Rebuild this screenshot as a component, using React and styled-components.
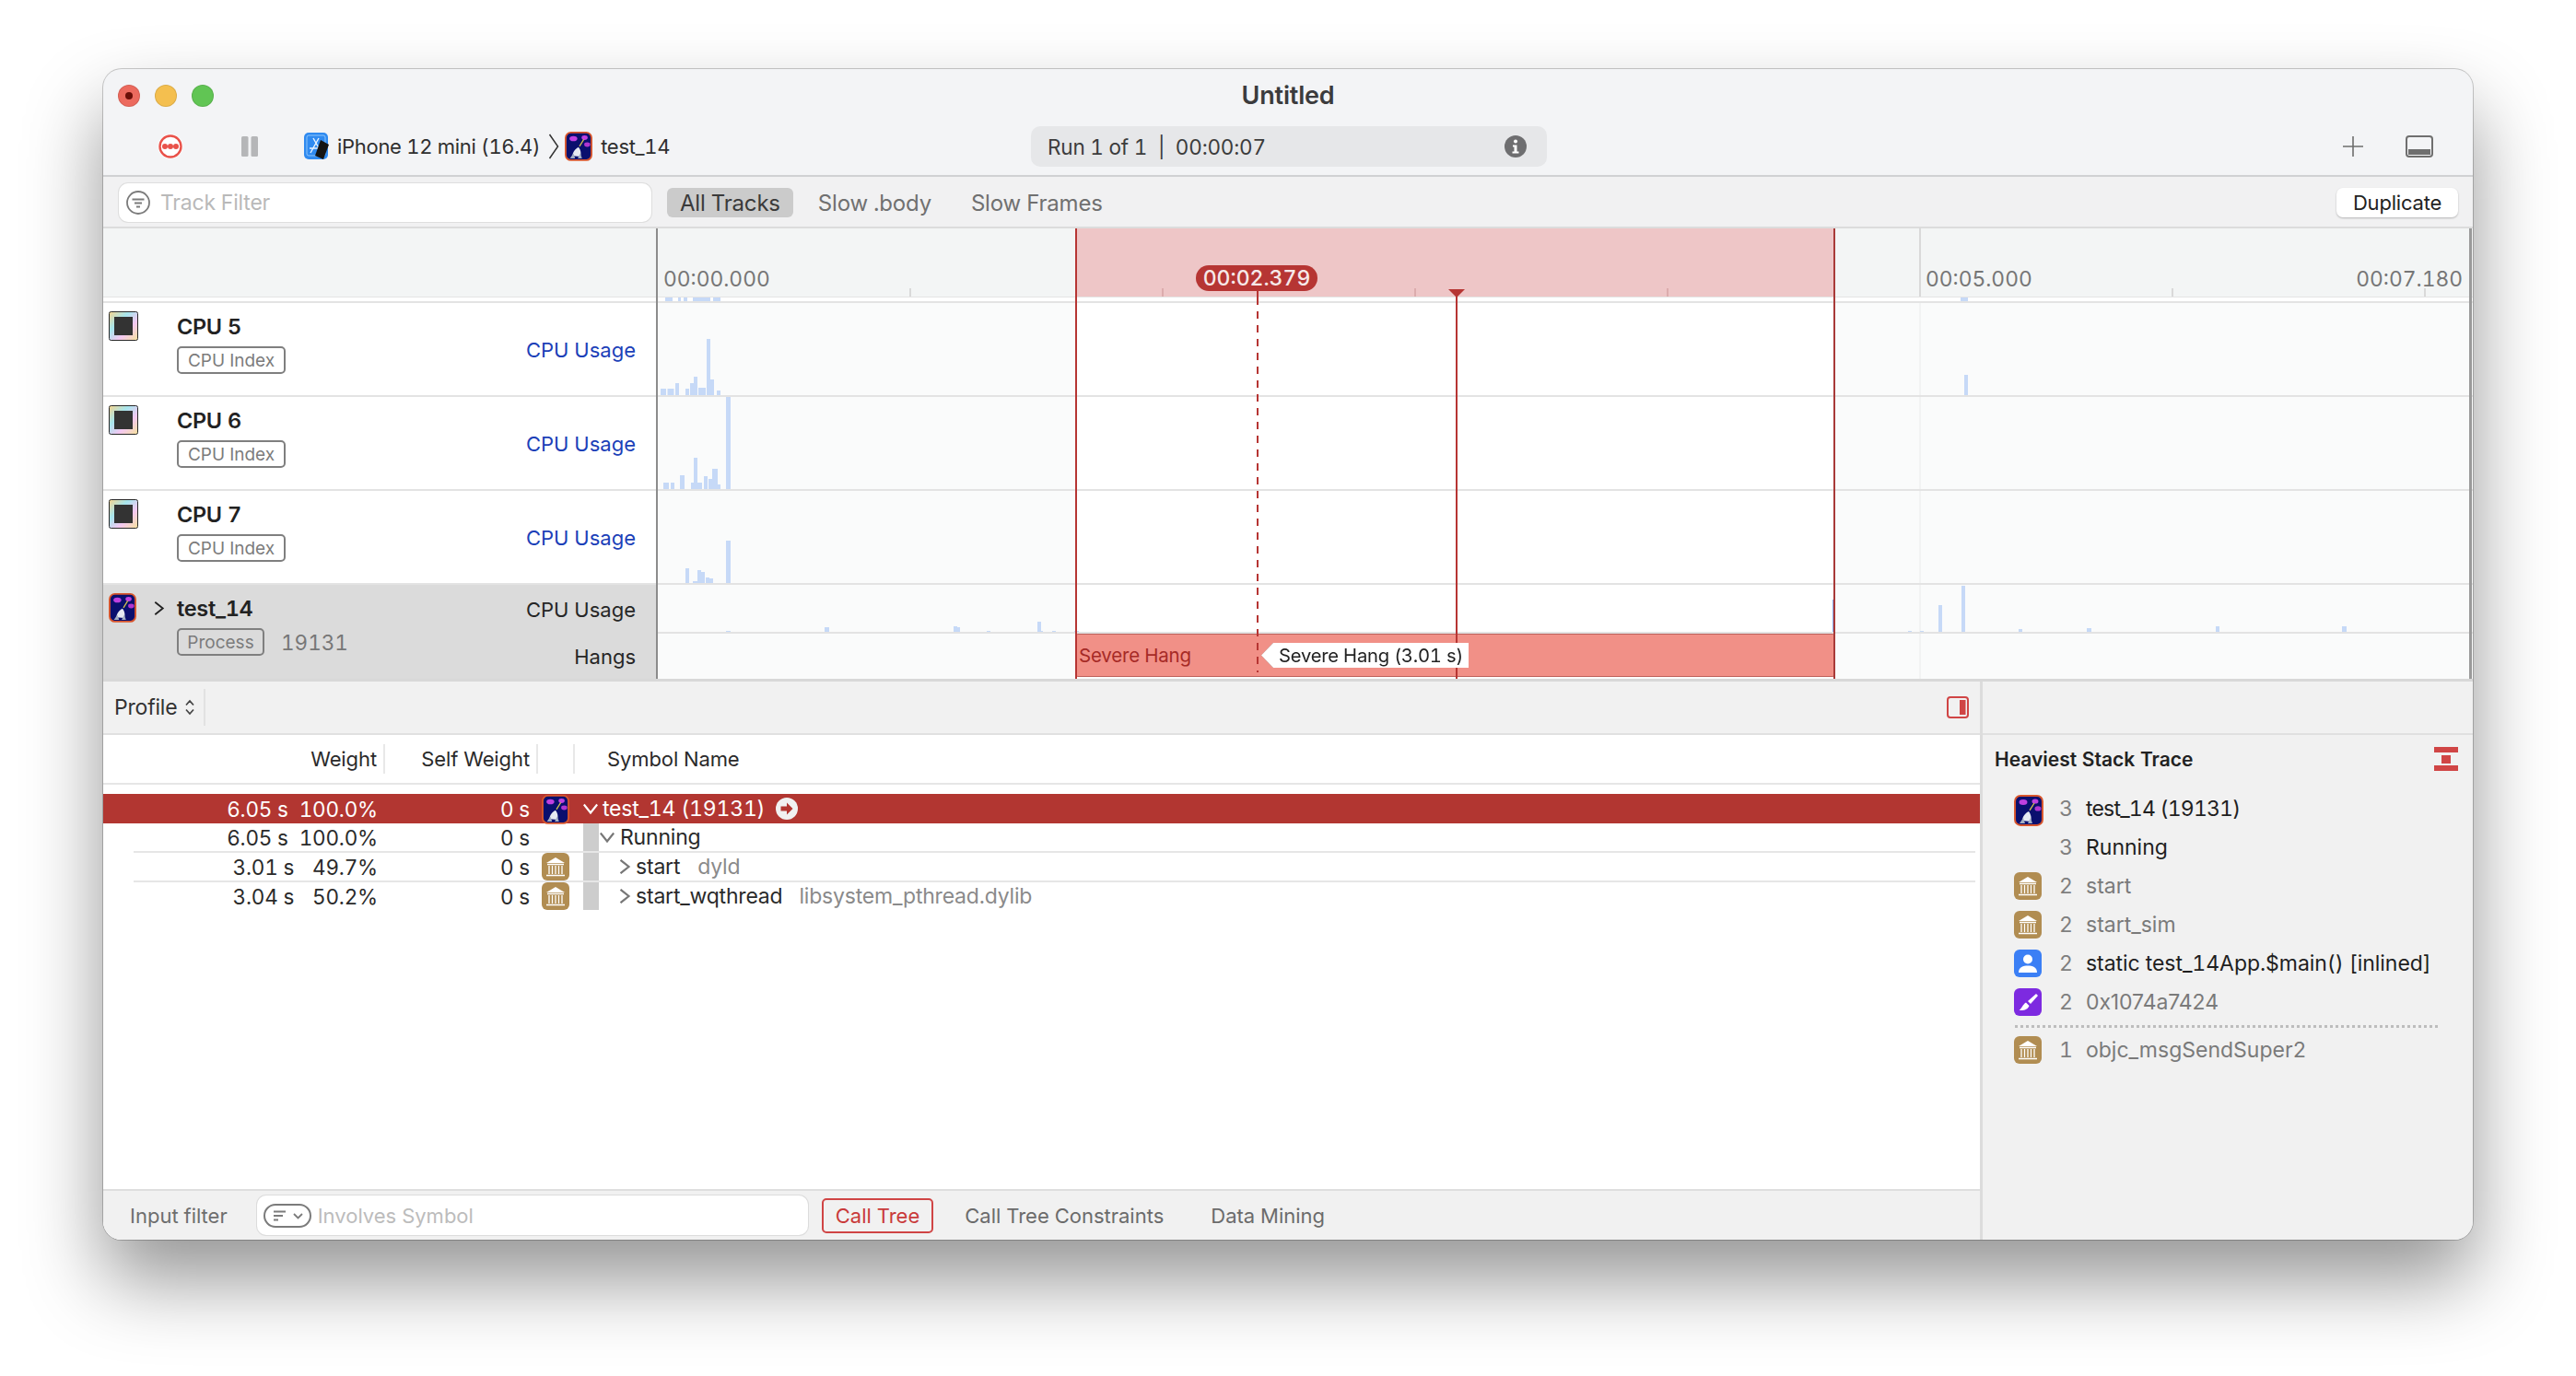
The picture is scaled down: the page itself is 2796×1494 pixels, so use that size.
import React from 'react'
import styled, { createGlobalStyle } from 'styled-components'

const FONT = 'Inter, "Noto Sans", "Liberation Sans", sans-serif'

const GlobalStyle = createGlobalStyle`
  html, body {
    margin: 0;
    padding: 0;
    background: #fff;
  }
  body {
    font-family: ${FONT};
    font-size: 22px;
    font-variant-numeric: tabular-nums;
    color: #262626;
    -webkit-font-smoothing: antialiased;
  }
  * {
    box-sizing: border-box;
  }
`

const Page = styled.div`
  width: 2796px;
  height: 1494px;
  padding: 75px 112px 148px;
  overflow: hidden;
  background: #fff;
`
const Window = styled.div`
  width: 2572px;
  height: 1271px;
  display: flex;
  flex-direction: column;
  overflow: hidden;
  border-radius: 20px;
  background: #f3f4f6;
  box-shadow: 0 0 0 1px rgba(0, 0, 0, 0.2), 0 44px 84px rgba(0, 0, 0, 0.42);
`

/* title + toolbar */
const TitleRow = styled.div`
  height: 58px;
  flex: none;
  position: relative;
  display: flex;
  align-items: center;
  justify-content: center;
  padding-bottom: 2px;
`
const Lights = styled.div`
  position: absolute;
  left: 16px;
  top: 17px;
  display: flex;
  gap: 16px;
`
const Light = styled.div`
  width: 24px;
  height: 24px;
  border-radius: 50%;
  display: flex;
  align-items: center;
  justify-content: center;
  background: ${(p) => p.$color};
  border: 1px solid rgba(0, 0, 0, 0.1);
  i {
    width: 8px;
    height: 8px;
    border-radius: 50%;
    background: #6b0f08;
  }
`
const Title = styled.div`
  font-size: 27px;
  font-weight: 600;
  color: #3b3b3d;
  letter-spacing: -0.2px;
`
const Toolbar = styled.div`
  height: 59px;
  flex: none;
  display: flex;
  align-items: center;
  padding-left: 59px;
  padding-bottom: 5px;
  border-bottom: 2px solid #d0d1d3;
`
const ToolGroup = styled.div`
  display: flex;
  align-items: center;
  flex: none;
  margin-left: ${(p) => p.$left || 0}px;
  width: ${(p) => (p.$w ? `${p.$w}px` : 'auto')};
`
const ToolText = styled.span`
  font-size: 22px;
  color: #2f2f2f;
  letter-spacing: -0.3px;
  white-space: nowrap;
  margin-left: ${(p) => p.$left}px;
`
const Breadcrumb = styled.svg`
  margin: 0 6px 0 9px;
  flex: none;
`
const RunPill = styled.div`
  width: 560px;
  height: 44px;
  padding: 0 22px 0 18px;
  display: flex;
  align-items: center;
  justify-content: space-between;
  border-radius: 10px;
  background: #e6e7e9;
  font-size: 22.5px;
  color: #3c3c3c;
  letter-spacing: -0.2px;
  white-space: pre;
`
const ToolEnd = styled.div`
  margin-left: auto;
  padding-right: 43px;
  display: flex;
  align-items: center;
  gap: 46px;
`

/* filter strip */
const FilterBar = styled.div`
  height: 56px;
  flex: none;
  display: flex;
  align-items: center;
  padding: 2px 16px 0 17px;
  background: #f1f1f2;
  border-bottom: 2px solid #dcdcdc;
`
const TrackFilter = styled.div`
  width: 578px;
  height: 42px;
  display: flex;
  align-items: center;
  gap: 11px;
  padding-left: 8px;
  border-radius: 10px;
  background: #fff;
  box-shadow: 0 0 0 1px #dedede;
  font-size: 23px;
  color: #b9b9b9;
  letter-spacing: -0.2px;
`
const Strategy = styled.div`
  height: 32px;
  margin-left: ${(p) => p.$left}px;
  padding: 0 14px;
  display: flex;
  align-items: center;
  border-radius: 6px;
  font-size: 24px;
  letter-spacing: -0.2px;
  color: ${(p) => (p.$active ? '#3a3a3a' : '#707070')};
  background: ${(p) => (p.$active ? '#cbcbcb' : 'transparent')};
`
const DuplicateBtn = styled.div`
  margin-left: auto;
  width: 132px;
  height: 32px;
  display: flex;
  align-items: center;
  justify-content: center;
  border-radius: 7px;
  background: #fff;
  box-shadow: 0 1px 2px rgba(0, 0, 0, 0.25);
  font-size: 22px;
  letter-spacing: -0.2px;
  color: #222;
`

/* instrument tracks */
const Tracks = styled.div`
  position: relative;
  flex: none;
  height: 492px;
  display: flex;
  flex-direction: column;
  background: #fff;
  border-bottom: 3px solid #d8d8d8;
`
const Ruler = styled.div`
  height: 75px;
  flex: none;
  display: flex;
  background: #f3f5f5;
  border-bottom: 1px solid #e4e4e4;
`
const RulerCorner = styled.div`
  width: 601px;
  flex: none;
`
const RulerAxis = styled.div`
  position: relative;
  flex: 1;
  color: #767676;
  font-size: 22.8px;
`
const RulerBand = styled.div`
  position: absolute;
  left: 454px;
  width: 825px;
  top: 0;
  bottom: 0;
  background: #eec6c7;
`
const RulerLabel = styled.span`
  position: absolute;
  bottom: 6px;
  ${(p) => (p.$right != null ? `right: ${p.$right}px;` : `left: ${p.$left}px;`)}
  line-height: 26px;
`
const Tick = styled.i`
  position: absolute;
  bottom: 0;
  height: ${(p) => (p.$major ? 75 : 9)}px;
  left: ${(p) => p.$left}px;
  width: 2px;
  background: ${(p) => (p.$pink ? '#dcacad' : '#d9d9d9')};
`
const TimePill = styled.div`
  position: absolute;
  left: 585px;
  top: 40px;
  width: 132px;
  height: 28px;
  display: flex;
  align-items: center;
  justify-content: center;
  border-radius: 14px;
  background: #b63533;
  color: #f6e9e9;
  font-size: 23px;
  font-weight: 500;
`
const CpuStrip = styled.div`
  height: 6px;
  flex: none;
  display: flex;
  border-bottom: 2px solid #e3e3e3;
  background: #fff;
`
const TrackRow = styled.div`
  height: 102px;
  flex: none;
  display: flex;
  border-bottom: ${(p) => (p.$last ? 'none' : '2px solid #e3e3e3')};
`
const TrackHead = styled.div`
  position: relative;
  width: 601px;
  flex: none;
  padding: 9px 23px 0 6px;
  display: flex;
  gap: 12px;
  background: ${(p) => (p.$selected ? '#dbdbdb' : '#fff')};
`
const HeadMain = styled.div`
  flex: 1;
  display: flex;
  flex-direction: column;
`
const TrackName = styled.div`
  margin-left: ${(p) => p.$indent || 0}px;
  height: 32px;
  display: flex;
  align-items: center;
  font-size: 23.5px;
  font-weight: 600;
  letter-spacing: -0.3px;
  color: #222;
`
const TagLine = styled.div`
  margin-left: ${(p) => p.$indent || 0}px;
  margin-top: 6px;
  display: flex;
  align-items: center;
  gap: 18px;
  font-size: 22.5px;
  color: #777;
`
const Tag = styled.div`
  width: ${(p) => p.$w}px;
  height: 30px;
  display: flex;
  align-items: center;
  justify-content: center;
  border: 2px solid #7f7f7f;
  border-radius: 5px;
  font-size: 19px;
  color: #7c7c7c;
`
const GraphLabels = styled.div`
  position: absolute;
  right: 23px;
  top: 0;
  bottom: 0;
  display: flex;
  flex-direction: column;
  align-items: flex-end;
  justify-content: ${(p) => (p.$split ? 'flex-start' : 'center')};
  gap: 25px;
  padding-top: ${(p) => (p.$split ? 14 : 2)}px;
  line-height: 26px;
  font-size: 22px;
  color: ${(p) => (p.$link ? '#1b40b8' : '#262626')};
`
const Lane = styled.div`
  position: relative;
  flex: 1;
  overflow: hidden;
  background: #fafbfb;
  svg {
    position: absolute;
    left: 0;
    top: 0;
  }
`
const StripLane = styled(Lane)`
  background: #fff;
`
const LaneSelection = styled.div`
  position: absolute;
  left: 454px;
  width: 825px;
  top: 0;
  bottom: 0;
  background: #fff;
`
const LaneGrid = styled.i`
  position: absolute;
  left: 1370px;
  width: 2px;
  top: 0;
  bottom: 0;
  background: #f2f3f3;
`
const LaneSplit = styled.div`
  position: absolute;
  left: 0;
  right: 0;
  top: 51px;
  height: 2px;
  background: #e3e3e3;
`
const HangBar = styled.div`
  position: absolute;
  left: 454px;
  width: 825px;
  top: 53px;
  height: 47px;
  display: flex;
  align-items: center;
  padding-left: 3px;
  border: 1px solid #bd625c;
  border-radius: 3px;
  background: #f19087;
  color: #a62a26;
  font-size: 20.5px;
  letter-spacing: -0.2px;
`

/* lines over the whole track area */
const Marker = styled.div`
  position: absolute;
  left: ${(p) => p.$left}px;
  top: ${(p) => p.$top}px;
  bottom: 0;
  width: ${(p) => p.$w || 2}px;
  background: ${(p) => p.$color};
`
const DashedMarker = styled.div`
  position: absolute;
  left: 1252px;
  top: 68px;
  bottom: 7px;
  width: 2px;
  background: linear-gradient(#b63533, #b63533) top / 100% 14px no-repeat,
    repeating-linear-gradient(to bottom, transparent 0 7px, #b63533 7px 15px);
`
const HeadMarker = styled.div`
  position: absolute;
  left: 1460px;
  top: 66px;
  width: 18px;
  height: 9px;
  clip-path: polygon(0 0, 100% 0, 50% 100%);
  background: #b63533;
`
const HangTipFrame = styled.div`
  position: absolute;
  left: 1257px;
  top: 450px;
  filter: drop-shadow(0 0 0.7px #6f6f6f);
`
const HangTip = styled.div`
  width: 225px;
  height: 27px;
  display: flex;
  align-items: center;
  padding-left: 19px;
  font-size: 20.2px;
  color: #222;
  letter-spacing: -0.2px;
  white-space: nowrap;
  background: #fff;
  clip-path: polygon(0 50%, 13px 0, 100% 0, 100% 100%, 13px 100%);
`

/* detail area */
const Detail = styled.div`
  flex: 1;
  min-height: 0;
  display: flex;
`
const DetailMain = styled.div`
  width: 2037px;
  flex: none;
  display: flex;
  flex-direction: column;
  background: #fff;
`
const ProfileBar = styled.div`
  height: 58px;
  flex: none;
  display: flex;
  align-items: center;
  padding-right: 12px;
  background: #f1f1f1;
  border-bottom: 2px solid #e0e0e0;
  color: #333;
  font-size: 23px;
`
const ProfileMenu = styled.div`
  height: 40px;
  width: 111px;
  padding-left: 12px;
  display: flex;
  align-items: center;
  gap: 9px;
  border-right: 2px solid #e2e2e2;
  letter-spacing: -0.2px;
`
const SidebarToggle = styled.svg`
  margin-left: auto;
`
const TableHead = styled.div`
  height: 54px;
  flex: none;
  display: flex;
  align-items: center;
  border-bottom: 2px solid #e6e6e6;
  font-size: 22px;
  letter-spacing: -0.1px;
  color: #2a2a2a;
`
const HeadCell = styled.div`
  width: ${(p) => p.$w}px;
  flex: ${(p) => (p.$grow ? 1 : 'none')};
  height: 32px;
  display: flex;
  align-items: center;
  justify-content: ${(p) => (p.$grow ? 'flex-start' : 'flex-end')};
  padding: ${(p) => (p.$grow ? '0 0 0 35px' : '0 7px 0 0')};
  border-right: ${(p) => (p.$grow ? 'none' : '2px solid #e8e8e8')};
`
const TreeBody = styled.div`
  flex: 1;
  padding-top: 10px;
`
const TreeRow = styled.div`
  height: ${(p) => p.$h || 30}px;
  display: flex;
  align-items: center;
  font-size: 23px;
  letter-spacing: -0.2px;
  color: ${(p) => (p.$selected ? '#fff' : '#2a2a2a')};
  background: ${(p) => (p.$selected ? '#b23631' : 'transparent')};
`
const RowRule = styled.div`
  height: 2px;
  margin: 0 5px 0 33px;
  background: #e6e6e6;
`
const WeightCell = styled.div`
  width: 298px;
  flex: none;
  display: flex;
  justify-content: flex-end;
  gap: ${(p) => p.$gap}px;
  font-size: 22.5px;
`
const SelfCell = styled.div`
  width: 165px;
  flex: none;
  text-align: right;
  font-size: 22.5px;
`
const IconCell = styled.div`
  width: 30px;
  height: 30px;
  margin: 0 15px 0 13px;
  flex: none;
`
const TreeCell = styled.div`
  flex: 1;
  height: 100%;
  display: flex;
  align-items: center;
`
const IndentBar = styled.div`
  width: 17px;
  height: 100%;
  flex: none;
  background: #cdcdcd;
`
const Chevron = styled.svg`
  flex: none;
  margin-left: ${(p) => p.$left || 0}px;
  margin-right: ${(p) => p.$right || 0}px;
`
const LibName = styled.span`
  margin-left: ${(p) => p.$left}px;
  color: #8a8a8a;
`
const GoCircle = styled.svg`
  margin-left: 12px;
`

const BottomBar = styled.div`
  height: 55px;
  flex: none;
  display: flex;
  align-items: center;
  padding-left: 29px;
  background: #f1f1f1;
  border-top: 2px solid #dedede;
  font-size: 22px;
  color: #6e6e6e;
`
const InputField = styled.div`
  width: 598px;
  height: 43px;
  margin-left: 32px;
  display: flex;
  align-items: center;
  gap: 7px;
  padding-left: 7px;
  border-radius: 10px;
  background: #fff;
  box-shadow: 0 0 0 1px #dcdcdc;
  color: #bcbcbc;
`
const BottomTab = styled.div`
  height: 38px;
  margin-left: ${(p) => p.$left}px;
  padding: 0 ${(p) => (p.$active ? 13 : 0)}px;
  display: flex;
  align-items: center;
  border-radius: 5px;
  border: ${(p) => (p.$active ? '2px solid #d04545' : 'none')};
  color: ${(p) => (p.$active ? '#c93a3a' : '#6b6b6b')};
`

/* right inspector */
const Inspector = styled.div`
  flex: 1;
  display: flex;
  flex-direction: column;
  background: #f1f1f1;
  border-left: 3px solid #dcdcdc;
`
const InspectorTop = styled.div`
  height: 58px;
  flex: none;
  border-bottom: 2px solid #e0e0e0;
`
const InspectorHead = styled.div`
  height: 52px;
  flex: none;
  padding: 0 16px 0 13px;
  display: flex;
  align-items: center;
  justify-content: space-between;
  font-size: 21px;
  font-weight: 600;
  color: #222;
`
const StackList = styled.div`
  padding: 7px 0 0 34px;
`
const StackRow = styled.div`
  height: 42px;
  display: flex;
  align-items: center;
  font-size: 23px;
  color: ${(p) => (p.$dim ? '#7a7a7a' : '#1f1f1f')};
`
const StackIcon = styled.div`
  width: 30px;
  height: 30px;
  flex: none;
`
const StackCount = styled.span`
  width: 48px;
  flex: none;
  padding-right: 14px;
  text-align: right;
  color: #7f7f7f;
`
const StackName = styled.span`
  letter-spacing: ${(p) => p.$track || 0}px;
  font-variant-numeric: ${(p) => (p.$proportional ? 'normal' : 'tabular-nums')};
`
const StackDots = styled.div`
  width: 460px;
  height: 3px;
  margin: 4px 0 3px 1px;
  background: repeating-linear-gradient(to right, #bdbdbd 0 3px, transparent 3px 6px);
`

/* drawings */
const Glyph = styled.svg`
  display: block;
`

const AppIcon = ({ size = 30 }) => (
  <Glyph width={size} height={size * 1.06} viewBox="0 0 32 34">
    <rect x="1" y="1" width="30" height="32" rx="6" fill="#0a0f6e" stroke="#d8552c" strokeWidth="2" />
    <ellipse cx="10" cy="8" rx="4.5" ry="3" fill="#c040e0" />
    <ellipse cx="23" cy="7" rx="3.5" ry="2.6" fill="#c040e0" />
    <ellipse cx="26" cy="15" rx="3.5" ry="2.6" fill="#b035d0" />
    <path d="M22 9 L17 17" stroke="#d9c64e" strokeWidth="1.3" />
    <path d="M16 18 C19 22 19 26 18 29 L9 28 C9 24 12 20 16 18 Z" fill="#e6eaf2" />
    <path d="M6 31 L10 25 L12 31 Z M20 31 L18 25 L15 31 Z" fill="#a3afc4" />
  </Glyph>
)

const XcodeIcon = () => (
  <Glyph width="30" height="30" viewBox="0 0 30 30">
    <rect x="1" y="0" width="26" height="29" rx="5" fill="#2f8af0" />
    <rect x="4" y="3" width="20" height="22" rx="2" fill="none" stroke="#8cc4fa" strokeWidth="1" />
    <path d="M8 22 L17 6 M20 22 L11 6 M7 17 L21 17" stroke="#e9f4ff" strokeWidth="1.4" />
    <path d="M19 8 L28 13 L22 29 L13 25 Z" fill="#141414" />
  </Glyph>
)

const CpuIcon = () => (
  <Glyph width="32" height="32" viewBox="0 0 32 32">
    <defs>
      <linearGradient id="cpuRim" x1="0" y1="0" x2="1" y2="1">
        <stop offset="0" stopColor="#f6d48e" />
        <stop offset="0.35" stopColor="#a6e6ee" />
        <stop offset="0.65" stopColor="#f4c8f2" />
        <stop offset="1" stopColor="#f6e29a" />
      </linearGradient>
    </defs>
    <rect x="0.5" y="0.5" width="31" height="31" rx="2" fill="url(#cpuRim)" stroke="#2a2a2a" />
    <rect x="6" y="6" width="20" height="20" fill="#333" />
  </Glyph>
)

const LibIcon = () => (
  <Glyph width="30" height="30" viewBox="0 0 30 30">
    <rect width="30" height="30" rx="6" fill="#b18d52" />
    <path d="M15 5 L25 11 L5 11 Z" fill="#fff" />
    <path d="M6 12.5 H24 M5 24.5 H25" stroke="#fff" strokeWidth="1.6" />
    <path d="M8 14 V23 M11.5 14 V23 M15 14 V23 M18.5 14 V23 M22 14 V23" stroke="#fff" strokeWidth="1.3" />
  </Glyph>
)

const UserIcon = () => (
  <Glyph width="30" height="30" viewBox="0 0 30 30">
    <rect width="30" height="30" rx="6" fill="#3b7ff5" />
    <circle cx="15" cy="10.5" r="5" fill="#fff" />
    <path d="M5 25 C5 19 10 17.5 15 17.5 C20 17.5 25 19 25 25 Z" fill="#fff" />
  </Glyph>
)

const BrushIcon = () => (
  <Glyph width="30" height="30" viewBox="0 0 30 30">
    <rect width="30" height="30" rx="6" fill="#7d2ae0" />
    <path d="M24 6 L15 14 L18 17 L26 8 Z" fill="#fff" />
    <path d="M13 15.5 L16.5 19 C15 23 11 24.5 5.5 24 C8.5 22 9.5 17.5 13 15.5 Z" fill="#fff" />
  </Glyph>
)

const TreeChevron = ({ open, color = '#777', size = 16, stroke = 2.2, left, right }) => (
  <Chevron width={size} height={size} viewBox="0 0 16 16" $left={left} $right={right} fill="none">
    <path
      d={open ? 'M0.8 3.5 L8 12.5 L15.2 3.5' : 'M3.5 0.8 L12.5 8 L3.5 15.2'}
      stroke={color}
      strokeWidth={stroke}
    />
  </Chevron>
)

const laneW = 1968
const barsCpu5 = [[4, 6, 7], [11.5, 7, 7], [20, 4, 13], [31, 4, 7], [36, 4, 13], [40, 4, 20], [45, 4, 8], [49, 4, 8], [54, 4, 61], [58, 4, 17], [65, 4, 5], [1419, 4, 22]]
const barsCpu6 = [[7, 6, 7], [15, 4, 7], [25, 5, 15], [37, 3, 7], [40, 4, 34], [44, 5, 7], [51, 4, 14], [56, 4, 11], [60, 6, 22], [66, 3, 5], [75, 5, 102]]
const barsCpu7 = [[31, 4, 16], [39, 5, 2], [44, 4, 14], [48, 4, 12], [53, 4, 6], [57, 4, 5], [75, 5, 46]]
const barsMain = [
  [75, 5, 1], [182, 5, 5], [322, 4, 6], [326, 3, 5], [358, 4, 1], [413, 4, 11], [417, 2, 1], [429, 4, 1], [453, 5, 1],
  [1358, 4, 1], [1371, 4, 1], [1391, 4, 29], [1416, 4, 50], [1478, 4, 3], [1552, 5, 4], [1692, 4, 6], [1829, 5, 6],
]
const barsStrip = [[9, 8, 4], [23, 3, 4], [29, 4, 4], [39, 19, 4], [61, 8, 4], [1415, 8, 4]]

const Bars = ({ bars, base, height }) => (
  <svg width={laneW} height={height} viewBox={`0 0 ${laneW} ${height}`}>
    {bars.map(([x, w, h], i) => (
      <rect key={i} x={x} y={base - h} width={w} height={h} fill="#c6d9f7" />
    ))}
  </svg>
)

const cpuTracks = [
  { name: 'CPU 5', bars: barsCpu5 },
  { name: 'CPU 6', bars: barsCpu6 },
  { name: 'CPU 7', bars: barsCpu7 },
]

const treeRows = [
  { time: '3.01 s', pct: '49.7%', name: 'start', lib: 'dyld', libLeft: 19 },
  { time: '3.04 s', pct: '50.2%', name: 'start_wqthread', lib: 'libsystem_pthread.dylib', libLeft: 18 },
]

const stackRows = [
  { icon: <LibIcon />, n: 2, name: 'start', dim: true },
  { icon: <LibIcon />, n: 2, name: 'start_sim', dim: true },
  { icon: <UserIcon />, n: 2, name: 'static test_14App.$main() [inlined]', track: -0.05 },
  { icon: <BrushIcon />, n: 2, name: '0x1074a7424', dim: true, track: -0.1, proportional: true },
]

const App = () => {
  return (
    <Page>
      <GlobalStyle />
      <Window>
        <TitleRow>
          <Lights>
            <Light $color="#ec6a5e">
              <i />
            </Light>
            <Light $color="#f4bf4f" />
            <Light $color="#61c554" />
          </Lights>
          <Title>Untitled</Title>
        </TitleRow>
        <Toolbar>
          <svg width="28" height="28" viewBox="0 0 28 28">
            <circle cx="14" cy="14" r="13.5" fill="#fff" />
            <circle cx="14" cy="14" r="11.5" fill="none" stroke="#e9524a" strokeWidth="2.4" />
            <circle cx="8" cy="14" r="3" fill="#e9524a" />
            <circle cx="14" cy="14" r="3" fill="#e9524a" />
            <circle cx="20" cy="14" r="3" fill="#e9524a" />
          </svg>
          <ToolGroup $left={63}>
            <svg width="18" height="22" viewBox="0 0 18 22">
              <rect x="0" width="7.5" height="22" rx="1.5" fill="#b5b6b8" />
              <rect x="10.5" width="7.5" height="22" rx="1.5" fill="#b5b6b8" />
            </svg>
          </ToolGroup>
          <ToolGroup $left={49} $w={790}>
            <XcodeIcon />
            <ToolText $left={7}>iPhone 12 mini (16.4)</ToolText>
            <Breadcrumb width="12" height="28" viewBox="0 0 12 28">
              <path d="M1.5 1 L10.5 14 L1.5 27" fill="none" stroke="#333" strokeWidth="1.5" />
            </Breadcrumb>
            <AppIcon />
            <ToolText $left={9}>test_14</ToolText>
          </ToolGroup>
          <RunPill>
            <span>Run 1 of 1  |  00:00:07</span>
            <svg width="24" height="24" viewBox="0 0 24 24">
              <circle cx="12" cy="12" r="12" fill="#6e6e70" />
              <circle cx="12" cy="6.5" r="2" fill="#fff" />
              <path d="M9 10.5 H13.5 V17.5 H15.5 V19.5 H8.5 V17.5 H10.5 V12.5 H9 Z" fill="#fff" />
            </svg>
          </RunPill>
          <ToolEnd>
            <svg width="22" height="22" viewBox="0 0 22 22">
              <path d="M11 0 V22 M0 11 H22" stroke="#6d6d6d" strokeWidth="1.6" />
            </svg>
            <svg width="30" height="24" viewBox="0 0 30 24">
              <rect x="1" y="1" width="28" height="22" rx="3" fill="none" stroke="#6f6f6f" strokeWidth="2" />
              <rect x="3" y="15" width="24" height="6" fill="#6f6f6f" />
            </svg>
          </ToolEnd>
        </Toolbar>

        <FilterBar>
          <TrackFilter>
            <svg width="26" height="26" viewBox="0 0 26 26">
              <circle cx="13" cy="13" r="12" fill="none" stroke="#7b7b7b" strokeWidth="1.8" />
              <path d="M6.5 9.5 H19.5 M9 13.5 H17 M11 17.5 H15" stroke="#7b7b7b" strokeWidth="2" />
            </svg>
            Track Filter
          </TrackFilter>
          <Strategy $active $left={17}>All Tracks</Strategy>
          <Strategy $left={13}>Slow .body</Strategy>
          <Strategy $left={15}>Slow Frames</Strategy>
          <DuplicateBtn>Duplicate</DuplicateBtn>
        </FilterBar>

        <Tracks>
          <Ruler>
            <RulerCorner />
            <RulerAxis>
              <RulerBand />
              <Tick $left={274} />
              <Tick $left={548} $pink />
              <Tick $left={822} $pink />
              <Tick $left={1096} $pink />
              <Tick $left={1370} $major />
              <Tick $left={1644} />
              <Tick $left={1918} />
              <RulerLabel $left={7}>00:00.000</RulerLabel>
              <RulerLabel $left={1377}>00:05.000</RulerLabel>
              <RulerLabel $right={11}>00:07.180</RulerLabel>
              <TimePill>00:02.379</TimePill>
            </RulerAxis>
          </Ruler>
          <CpuStrip>
            <RulerCorner />
            <StripLane>
              <Bars bars={barsStrip} base={4} height={4} />
            </StripLane>
          </CpuStrip>

          {cpuTracks.map((t) => (
            <TrackRow key={t.name}>
              <TrackHead>
                <CpuIcon />
                <HeadMain>
                  <TrackName $indent={30}>{t.name}</TrackName>
                  <TagLine $indent={30}>
                    <Tag $w={118}>CPU Index</Tag>
                  </TagLine>
                </HeadMain>
                <GraphLabels $link>CPU Usage</GraphLabels>
              </TrackHead>
              <Lane>
                <LaneSelection />
                <LaneGrid />
                <Bars bars={t.bars} base={100} height={100} />
              </Lane>
            </TrackRow>
          ))}

          <TrackRow $last>
            <TrackHead $selected>
              <AppIcon />
              <HeadMain>
                <TrackName>
                  <TreeChevron left={5} right={12} size={15} stroke={2} color="#222" />
                  test_14
                </TrackName>
                <TagLine $indent={32}>
                  <Tag $w={95}>Process</Tag>
                  19131
                </TagLine>
              </HeadMain>
              <GraphLabels $split>
                <span>CPU Usage</span>
                <span>Hangs</span>
              </GraphLabels>
            </TrackHead>
            <Lane>
              <LaneSelection />
              <LaneGrid />
              <Bars bars={barsMain} base={51} height={51} />
              <svg width={laneW} height="51" viewBox={`0 0 ${laneW} 51`}>
                <rect x="1276" y="16" width="2" height="35" fill="#88a8e8" />
              </svg>
              <LaneSplit />
              <HangBar>Severe Hang</HangBar>
            </Lane>
          </TrackRow>

          <Marker $left={600} $top={0} $color="#8c8c8c" />
          <Marker $left={2568} $top={0} $w={3} $color="#9a9a9a" />
          <Marker $left={1055} $top={0} $color="#b63533" />
          <Marker $left={1878} $top={0} $color="#a83a38" />
          <Marker $left={1468} $top={68} $color="#b63533" />
          <DashedMarker />
          <HeadMarker />
          <HangTipFrame>
            <HangTip>Severe Hang (3.01 s)</HangTip>
          </HangTipFrame>
        </Tracks>

        <Detail>
          <DetailMain>
            <ProfileBar>
              <ProfileMenu>
                Profile
                <svg width="10" height="18" viewBox="0 0 10 18">
                  <path d="M1 6.5 L5 2 L9 6.5 M1 11.5 L5 16 L9 11.5" fill="none" stroke="#444" strokeWidth="1.7" />
                </svg>
              </ProfileMenu>
              <SidebarToggle width="24" height="24" viewBox="0 0 24 24">
                <rect x="1" y="1" width="22" height="22" rx="3" fill="none" stroke="#d04545" strokeWidth="2" />
                <rect x="14" y="4" width="6.5" height="16" fill="#d04545" />
              </SidebarToggle>
            </ProfileBar>
            <TableHead>
              <HeadCell $w={306}>Weight</HeadCell>
              <HeadCell $w={166}>Self Weight</HeadCell>
              <HeadCell $w={40} />
              <HeadCell $grow>Symbol Name</HeadCell>
            </TableHead>
            <TreeBody>
              <TreeRow $selected $h={32}>
                <WeightCell $gap={12}>
                  <span>6.05 s</span>
                  <span>100.0%</span>
                </WeightCell>
                <SelfCell>0 s</SelfCell>
                <IconCell>
                  <AppIcon />
                </IconCell>
                <TreeCell>
                  <TreeChevron open color="#fff" left={0} right={5} />
                  test_14 (19131)
                  <GoCircle width="24" height="24" viewBox="0 0 24 24">
                    <circle cx="12" cy="12" r="12" fill="#f1f1f1" />
                    <path d="M5.5 9.5 H12 V5.5 L18.5 12 L12 18.5 V14.5 H5.5 Z" fill="#b23631" />
                  </GoCircle>
                </TreeCell>
              </TreeRow>
              <TreeRow>
                <WeightCell $gap={12}>
                  <span>6.05 s</span>
                  <span>100.0%</span>
                </WeightCell>
                <SelfCell>0 s</SelfCell>
                <IconCell />
                <TreeCell>
                  <IndentBar />
                  <TreeChevron open left={1} right={6} />
                  Running
                </TreeCell>
              </TreeRow>
              <RowRule />
              {treeRows.map((r, i) => (
                <React.Fragment key={r.name}>
                  <TreeRow>
                    <WeightCell $gap={20}>
                      <span>{r.time}</span>
                      <span>{r.pct}</span>
                    </WeightCell>
                    <SelfCell>0 s</SelfCell>
                    <IconCell>
                      <LibIcon />
                    </IconCell>
                    <TreeCell>
                      <IndentBar />
                      <TreeChevron left={20} right={4} size={16} />
                      {r.name}
                      <LibName $left={r.libLeft}>{r.lib}</LibName>
                    </TreeCell>
                  </TreeRow>
                  {i === 0 && <RowRule />}
                </React.Fragment>
              ))}
            </TreeBody>
            <BottomBar>
              Input filter
              <InputField>
                <svg width="52" height="26" viewBox="0 0 52 26">
                  <rect x="1" y="1" width="50" height="24" rx="12" fill="none" stroke="#7b7b7b" strokeWidth="2" />
                  <path d="M11 8.5 H24 M11 13 H21 M11 17.5 H16" stroke="#7b7b7b" strokeWidth="2" />
                  <path d="M33 11 L37.5 15.5 L42 11" fill="none" stroke="#7b7b7b" strokeWidth="1.8" />
                </svg>
                Involves Symbol
              </InputField>
              <BottomTab $active $left={15}>Call Tree</BottomTab>
              <BottomTab $left={34}>Call Tree Constraints</BottomTab>
              <BottomTab $left={51}>Data Mining</BottomTab>
            </BottomBar>
          </DetailMain>
          <Inspector>
            <InspectorTop />
            <InspectorHead>
              Heaviest Stack Trace
              <svg width="26" height="26" viewBox="0 0 26 26">
                <rect width="26" height="6" fill="#d04545" />
                <rect x="8" y="9" width="10" height="9" fill="#d04545" />
                <rect y="20" width="26" height="6" fill="#d04545" />
              </svg>
            </InspectorHead>
            <StackList>
              <StackRow>
                <StackIcon>
                  <AppIcon size={32} />
                </StackIcon>
                <StackCount>3</StackCount>
                <StackName $track={-0.8}>test_14 (19131)</StackName>
              </StackRow>
              <StackRow>
                <StackIcon />
                <StackCount>3</StackCount>
                Running
              </StackRow>
              {stackRows.map((r) => (
                <StackRow key={r.name} $dim={r.dim}>
                  <StackIcon>{r.icon}</StackIcon>
                  <StackCount>{r.n}</StackCount>
                  <StackName $track={r.track} $proportional={r.proportional}>{r.name}</StackName>
                </StackRow>
              ))}
              <StackDots />
              <StackRow $dim>
                <StackIcon>
                  <LibIcon />
                </StackIcon>
                <StackCount>1</StackCount>
                objc_msgSendSuper2
              </StackRow>
            </StackList>
          </Inspector>
        </Detail>
      </Window>
    </Page>
  )
}

export default App
